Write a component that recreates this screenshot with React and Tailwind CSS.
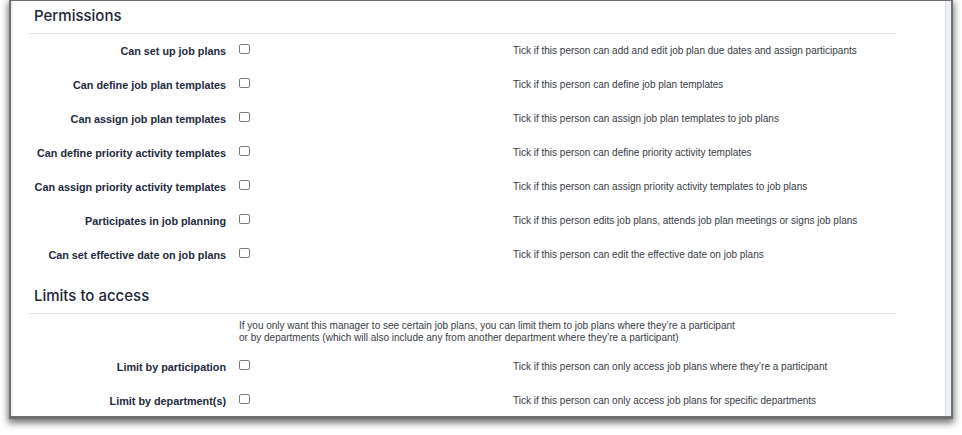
import React from "react";

const perms = [
  ["Can set up job plans", "Tick if this person can add and edit job plan due dates and assign participants"],
  ["Can define job plan templates", "Tick if this person can define job plan templates"],
  ["Can assign job plan templates", "Tick if this person can assign job plan templates to job plans"],
  ["Can define priority activity templates", "Tick if this person can define priority activity templates"],
  ["Can assign priority activity templates", "Tick if this person can assign priority activity templates to job plans"],
  ["Participates in job planning", "Tick if this person edits job plans, attends job plan meetings or signs job plans"],
  ["Can set effective date on job plans", "Tick if this person can edit the effective date on job plans"],
];

const limits = [
  ["Limit by participation", "Tick if this person can only access job plans where they\u2019re a participant"],
  ["Limit by department(s)", "Tick if this person can only access job plans for specific departments"],
];

function Row({ label, desc }) {
  return (
    <div className="flex h-[34px] items-center">
      <div className="w-[198px] text-right text-[10.8px] font-bold leading-[14px] text-[#1d2a3e] [font-family:'Liberation_Sans',Arial,sans-serif]">
        {label}
      </div>
      <div className="ml-[13px] mb-[4px] h-[10px] w-[11px] shrink-0 rounded-[2px] border border-[#7a7a7a] bg-white" />
      <div className="ml-[263px] text-[10px] leading-[12px] text-[#363b45] [font-family:'Liberation_Sans',Arial,sans-serif]">
        {desc}
      </div>
    </div>
  );
}

function Heading({ children, h }) {
  return (
    <div className={`flex items-end border-b border-[#e4e6e8] pb-[9px] pl-[6px] ${h}`}>
      <span className="text-[15px] font-medium leading-[16px] text-[#1c2738] [font-family:Inter,'Open_Sans',sans-serif]">
        {children}
      </span>
    </div>
  );
}

export default function App() {
  return (
    <div className="h-[435px] w-[962px] overflow-hidden bg-white">
      <div className="ml-[9px] flex h-[419px] w-[944px] border-2 border-t-[1px] border-b-[3px] border-[#707070] bg-white shadow-[0_3px_7px_1px_rgba(0,0,0,0.55)]">
        <div className="w-[2px] shrink-0 bg-[#eef1f4]" />
        <div className="flex-1 overflow-hidden pl-[15px]">
          <div className="w-[868px]">
            <Heading h="h-[33px]">Permissions</Heading>
            {perms.map(([l, d]) => (
              <Row key={l} label={l} desc={d} />
            ))}
            <Heading h="h-[42px]">Limits to access</Heading>
            <div className="h-[36px] pl-[211px] pt-[6px] text-[10px] leading-[12px] text-[#363b45] [font-family:'Liberation_Sans',Arial,sans-serif]">
              <div>If you only want this manager to see certain job plans, you can limit them to job plans where they&#8217;re a participant</div>
              <div>or by departments (which will also include any from another department where they&#8217;re a participant)</div>
            </div>
            {limits.map(([l, d]) => (
              <Row key={l} label={l} desc={d} />
            ))}
          </div>
        </div>
        <div className="w-[6px] shrink-0 border-l border-[#d6dde3] bg-[#edf1f5]" />
      </div>
    </div>
  );
}
